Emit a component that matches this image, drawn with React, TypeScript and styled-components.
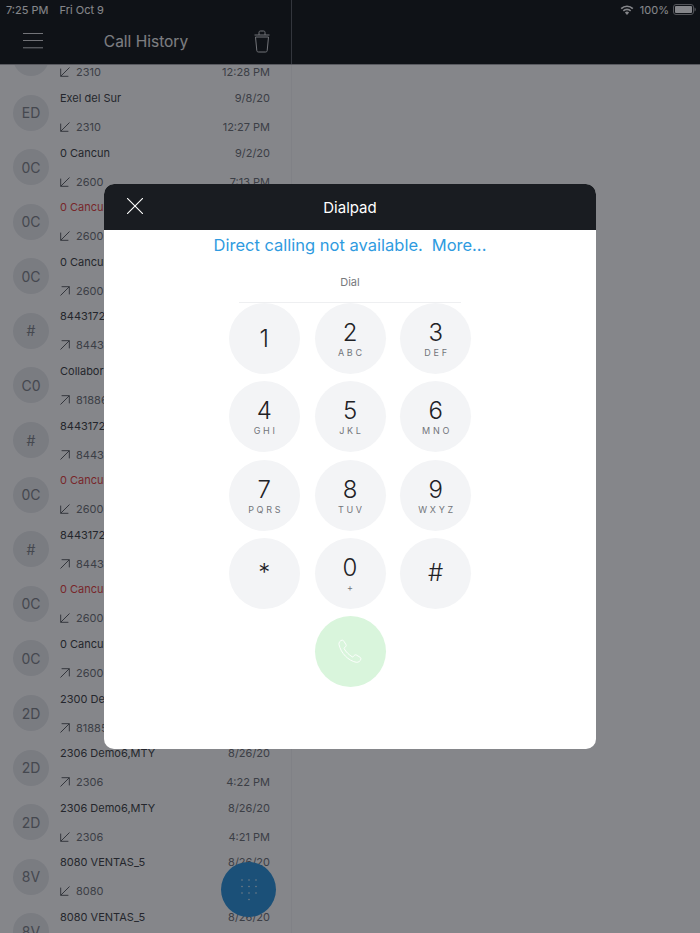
import React from "react";
import styled, { createGlobalStyle } from "styled-components";

const Global = createGlobalStyle`
  html, body { margin: 0; padding: 0; background: #fff; }
  * { box-sizing: border-box; }
  body { font-family: Inter, "Noto Sans", sans-serif; }
`;

const Page = styled.div`
  position: relative;
  width: 700px;
  height: 933px;
  overflow: hidden;
  display: flex;
  flex-direction: column;
  background: #fff;
`;

const Header = styled.header`
  position: relative;
  z-index: 1;
  flex: none;
  height: 65px;
  background: #131719;
  display: flex;
  border-bottom: 1px solid #a6a7aa;
`;

const HeaderLeft = styled.div`
  flex: none;
  width: 292px;
  border-right: 1px solid #5b5e64;
  display: flex;
  flex-direction: column;
`;

const HeaderRight = styled.div`
  flex: 1;
  display: flex;
  flex-direction: column;
`;

const StatusBar = styled.div<{ $end?: boolean }>`
  flex: none;
  height: 20px;
  display: flex;
  align-items: center;
  justify-content: ${(p) => (p.$end ? "flex-end" : "flex-start")};
  padding: 0 ${(p) => (p.$end ? "4px" : "0")} 1px ${(p) => (p.$end ? "0" : "6px")};
  color: #ffffff;
  font-size: 11px;
`;

const StatusDate = styled.span`
  margin-left: 11px;
`;

const Percent = styled.span`
  margin: 0 4px 0 6px;
`;

const Nav = styled.nav`
  flex: 1;
  padding: 0 21px 2px 23px;
  display: flex;
  align-items: center;
  justify-content: space-between;
`;

const NavTitle = styled.h1`
  margin: 0 5px 0 0;
  font-size: 15.5px;
  font-weight: 400;
  color: #eeeeee;
`;

const Body = styled.main`
  flex: 1;
  min-height: 0;
  display: flex;
  overflow: hidden;
`;

const ListPane = styled.section`
  position: relative;
  width: 292px;
  border-right: 1px solid #f4f5f6;
  overflow: hidden;
`;

const List = styled.div`
  margin-top: -34.4px;
`;

const Row = styled.div`
  height: 54.6px;
  display: flex;
  align-items: center;
  padding: 0 21px 0 13px;
`;

const Avatar = styled.div`
  flex: none;
  width: 36px;
  height: 36px;
  margin-right: 11px;
  border-radius: 50%;
  background: #e8eaed;
  color: #7f8389;
  font-size: 14px;
  display: flex;
  align-items: center;
  justify-content: center;
`;

const RowText = styled.div`
  flex: 1;
  min-width: 0;
  display: flex;
  flex-direction: column;
  gap: 13px;
`;

const Line = styled.div`
  height: 16px;
  display: flex;
  align-items: center;
  justify-content: space-between;
  white-space: nowrap;
`;

const Name = styled.span<{ $missed?: boolean }>`
  font-size: 11px;
  color: ${(p) => (p.$missed ? "#e5413f" : "#3c3f44")};
`;

const Stamp = styled.span`
  font-size: 11px;
  color: #6d7076;
`;

const Ext = styled.span`
  display: flex;
  align-items: center;
  gap: 6px;
  font-size: 11px;
  color: #6d7076;
`;

const Fab = styled.div`
  position: absolute;
  left: 221px;
  top: 862px;
  width: 55px;
  height: 55px;
  border-radius: 50%;
  background: #2b93db;
  display: flex;
  align-items: center;
  justify-content: center;
`;

const Scrim = styled.div`
  position: absolute;
  inset: 0;
  z-index: 2;
  padding-top: 184px;
  background: rgba(11, 13, 21, 0.5);
  display: flex;
  justify-content: center;
  align-items: flex-start;
`;

const Modal = styled.div`
  width: 492px;
  height: 565px;
  border-radius: 10px;
  overflow: hidden;
  background: #fff;
  display: flex;
  flex-direction: column;
  align-items: center;
`;

const ModalHeader = styled.div`
  position: relative;
  flex: none;
  width: 100%;
  height: 46px;
  background: #191c21;
  color: #fff;
  font-size: 15px;
  display: flex;
  align-items: center;
  justify-content: center;
`;

const CloseIcon = styled.svg`
  position: absolute;
  left: 23px;
  top: 14px;
`;

const Notice = styled.div`
  margin-top: 4px;
  height: 22px;
  display: flex;
  gap: 9px;
  align-items: center;
  font-size: 16.5px;
  color: #2f9be0;
`;

const DialField = styled.div`
  flex: none;
  width: 222px;
  height: 37px;
  margin-top: 10px;
  border-bottom: 1px solid #eeeff1;
  padding-top: 8px;
  text-align: center;
  font-size: 11px;
  line-height: 16px;
  color: #77797d;
`;

const Keys = styled.div`
  display: grid;
  grid-template-columns: repeat(3, 71px);
  grid-auto-rows: 71px;
  column-gap: 14.7px;
  row-gap: 7.3px;
`;

const Key = styled.div`
  border-radius: 50%;
  background: #f3f4f6;
  color: #1f2226;
  display: flex;
  flex-direction: column;
  align-items: center;
  justify-content: center;
`;

const Digit = styled.span`
  font-size: 24px;
  font-weight: 300;
  line-height: 28px;
`;

const Letters = styled.span`
  font-size: 9px;
  line-height: 11px;
  letter-spacing: 2.7px;
  margin-right: -2.7px;
  color: #72757a;
`;

const CallKey = styled.div`
  grid-column: 2;
  border-radius: 50%;
  background: #d9f5dc;
  display: flex;
  align-items: center;
  justify-content: center;
`;

const In = () => (
  <svg width="10" height="10" viewBox="0 0 10 10" fill="none" stroke="#4a4d52" strokeWidth="0.9">
    <path d="M9.5 0.5 L0.7 9.3 M0.7 1.6 V9.3 H8.4" />
  </svg>
);

const Out = () => (
  <svg width="10" height="10" viewBox="0 0 10 10" fill="none" stroke="#4a4d52" strokeWidth="0.9">
    <path d="M0.5 9.5 L9.3 0.7 M1.6 0.7 H9.3 V8.4" />
  </svg>
);

type Call = {
  initials?: string;
  name?: string;
  date?: string;
  ext?: string;
  time?: string;
  dir: "in" | "out";
  missed?: boolean;
};

const calls: Call[] = [
  { ext: "2310", time: "12:28 PM", dir: "in" },
  { initials: "ED", name: "Exel del Sur", date: "9/8/20", ext: "2310", time: "12:27 PM", dir: "in" },
  { initials: "0C", name: "0 Cancun", date: "9/2/20", ext: "2600", time: "7:13 PM", dir: "in" },
  { initials: "0C", name: "0 Cancun", ext: "2600", dir: "in", missed: true },
  { initials: "0C", name: "0 Cancun", ext: "2600", dir: "out" },
  { initials: "#", name: "8443172", ext: "8443", dir: "out" },
  { initials: "C0", name: "Collabor", ext: "81886", dir: "out" },
  { initials: "#", name: "8443172", ext: "8443", dir: "out" },
  { initials: "0C", name: "0 Cancun", ext: "2600", dir: "in", missed: true },
  { initials: "#", name: "8443172", ext: "8443", dir: "out" },
  { initials: "0C", name: "0 Cancun", ext: "2600", dir: "in", missed: true },
  { initials: "0C", name: "0 Cancun", ext: "2600", dir: "out" },
  { initials: "2D", name: "2300 De", ext: "81885", dir: "out" },
  { initials: "2D", name: "2306 Demo6,MTY", date: "8/26/20", ext: "2306", time: "4:22 PM", dir: "out" },
  { initials: "2D", name: "2306 Demo6,MTY", date: "8/26/20", ext: "2306", time: "4:21 PM", dir: "in" },
  { initials: "8V", name: "8080 VENTAS_5", date: "8/26/20", ext: "8080", dir: "in" },
  { initials: "8V", name: "8080 VENTAS_5", date: "8/26/20", dir: "in" },
];

const keys: [string, string][] = [
  ["1", ""], ["2", "ABC"], ["3", "DEF"],
  ["4", "GHI"], ["5", "JKL"], ["6", "MNO"],
  ["7", "PQRS"], ["8", "TUV"], ["9", "WXYZ"],
  ["*", ""], ["0", "+"], ["#", ""],
];

export default function App() {
  return (
    <Page>
      <Global />
      <Header>
        <HeaderLeft>
          <StatusBar>
            <span>7:25 PM</span>
            <StatusDate>Fri Oct 9</StatusDate>
          </StatusBar>
          <Nav>
            <svg width="20" height="16" viewBox="0 0 20 16" stroke="#d8d9db" strokeWidth="1">
              <path d="M0 .5h20M0 7.500h20M0 14.800h20" />
            </svg>
            <NavTitle>Call History</NavTitle>
            <svg width="16" height="23" viewBox="0 0 16 23" fill="none" stroke="#d8d9db" strokeWidth="1">
              <path d="M.5 5h15M5 5V2.500C5 1.500 5.500 1 6.500 1h3c1 0 1.500.5 1.500 1.500V5" />
              <path d="M1.500 7 2.800 20.500c.1 1 .7 1.500 1.700 1.500h7c1 0 1.600-.5 1.700-1.500L14.500 7Z" />
            </svg>
          </Nav>
        </HeaderLeft>
        <HeaderRight>
          <StatusBar $end>
            <svg width="14" height="10" viewBox="0 0 14 10" fill="#fff">
              <path d="M7 10 4.900 7.600a3 3 0 0 1 4.200 0Z" />
              <path d="M3.900 6.500 2.800 5.300a6 6 0 0 1 8.400 0L10.100 6.500a4.400 4.400 0 0 0-6.200 0Z" />
              <path d="M1.800 4.200.6 3a9.200 9.200 0 0 1 12.800 0l-1.200 1.200a7.500 7.500 0 0 0-10.400 0Z" />
            </svg>
            <Percent>100%</Percent>
            <svg width="23" height="11" viewBox="0 0 23 11">
              <rect x="0.5" y="0.5" width="20" height="10" rx="2.500" fill="none" stroke="#9a9b9d" />
              <rect x="2" y="2" width="17" height="7" rx="1" fill="#fff" />
              <path d="M21.500 3.500c.8.200 1.300 1 1.300 2s-.5 1.800-1.300 2Z" fill="#9a9b9d" />
            </svg>
          </StatusBar>
        </HeaderRight>
      </Header>
      <Body>
        <ListPane>
          <List>
            {calls.map((c, i) => (
              <Row key={i}>
                <Avatar>{c.initials}</Avatar>
                <RowText>
                  <Line>
                    <Name $missed={c.missed}>{c.name}</Name>
                    {c.date && <Stamp>{c.date}</Stamp>}
                  </Line>
                  <Line>
                    {c.ext && (
                      <Ext>
                        {c.dir === "in" ? <In /> : <Out />}
                        {c.ext}
                      </Ext>
                    )}
                    {c.time && <Stamp>{c.time}</Stamp>}
                  </Line>
                </RowText>
              </Row>
            ))}
          </List>
        </ListPane>
      </Body>
      <Fab>
        <svg width="18" height="24" viewBox="0 0 18 24" fill="#d8ecfa">
          {[2, 9, 16].flatMap((x) =>
            [2, 8.5, 15].map((y) => <circle key={`${x}-${y}`} cx={x} cy={y} r="0.8" />)
          )}
          <circle cx="9" cy="21.500" r="0.8" />
        </svg>
      </Fab>
      <Scrim>
        <Modal>
          <ModalHeader>
            <CloseIcon width="16" height="16" viewBox="0 0 16 16" stroke="#fff" strokeWidth="1.100">
              <path d="M0 0 16 16M16 0 0 16" />
            </CloseIcon>
            Dialpad
          </ModalHeader>
          <Notice>
            <span>Direct calling not available.</span>
            <span>More...</span>
          </Notice>
          <DialField>Dial</DialField>
          <Keys>
            {keys.map(([d, l]) => (
              <Key key={d}>
                <Digit>{d}</Digit>
                {l && <Letters>{l}</Letters>}
              </Key>
            ))}
            <CallKey>
              <svg width="26" height="26" viewBox="0 0 26 26" fill="none" stroke="#fff" strokeWidth="0.9">
                <path d="M2 5.500C1.600 3.500 3.300 1.300 5 1.200c1-.1 1.500.4 2 1.200l2 3.300c.4.800.2 1.500-.4 2L7.400 8.700c-.4.300-.4.700-.2 1.100 1.800 3.100 4.500 5.800 8 8 .4.200.8.200 1.100-.2l1-1.200c.6-.6 1.300-.8 2-.4l3.400 2c.9.500 1.300 1.200 1.100 2.200-.3 1.800-2.500 3.400-4.500 3.100C11.500 21.800 3.800 14.200 2 5.500Z" />
              </svg>
            </CallKey>
          </Keys>
        </Modal>
      </Scrim>
    </Page>
  );
}
